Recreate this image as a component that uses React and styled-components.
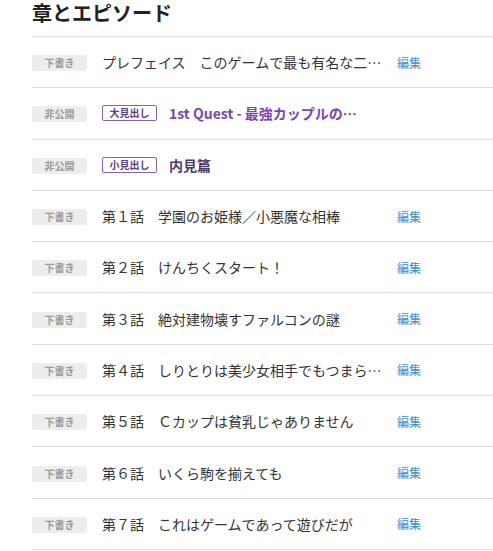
import React from 'react'
import styled, { createGlobalStyle } from 'styled-components'

const GlobalStyle = createGlobalStyle`
  html, body {
    margin: 0;
    padding: 0;
    background: #fff;
  }
  body {
    font-family: "Noto Sans CJK JP", "Noto Sans", sans-serif;
    color: #333;
    overflow: hidden;
  }
`

const episodes = [
  { type: 'episode', status: '下書き', title: 'プレフェイス　このゲームで最も有名な二人の話' },
  { type: 'heading', status: '非公開', level: '大見出し', title: '1st Quest - 最強カップルの誕生と始まり' },
  { type: 'heading', status: '非公開', level: '小見出し', title: '内見篇' },
  { type: 'episode', status: '下書き', title: '第１話　学園のお姫様／小悪魔な相棒' },
  { type: 'episode', status: '下書き', title: '第２話　けんちくスタート！' },
  { type: 'episode', status: '下書き', title: '第３話　絶対建物壊すファルコンの謎' },
  { type: 'episode', status: '下書き', title: '第４話　しりとりは美少女相手でもつまらない' },
  { type: 'episode', status: '下書き', title: '第５話　Ｃカップは貧乳じゃありません' },
  { type: 'episode', status: '下書き', title: '第６話　いくら駒を揃えても' },
  { type: 'episode', status: '下書き', title: '第７話　これはゲームであって遊びだが' },
]

const App = () => {
  return (
    <Page>
      <GlobalStyle />
      <Title>章とエピソード</Title>
      <List>
        {episodes.map((ep, i) => (
          <Row key={i}>
            <Status>{ep.status}</Status>
            {ep.type === 'heading' ? (
              <HeadingCell>
                <LevelTag>{ep.level}</LevelTag>
                <HeadingText $big={ep.level === '大見出し'}>{ep.title}</HeadingText>
              </HeadingCell>
            ) : (
              <>
                <EpisodeTitle>{ep.title}</EpisodeTitle>
                <EditLink href="#">編集</EditLink>
              </>
            )}
          </Row>
        ))}
      </List>
    </Page>
  )
}

export default App

const Page = styled.div`
  padding-left: 32px;
`

const Title = styled.h2`
  margin: 0 0 11px;
  padding-top: 1px;
  line-height: 24px;
  font-size: 20px;
  font-weight: bold;
  color: #222;
`

const List = styled.ul`
  list-style: none;
  margin: 0;
  padding: 0;
  border-top: 1px solid #ddd;
`

const Row = styled.li`
  display: flex;
  align-items: center;
  height: 50.3px;
  border-bottom: 1px solid #ddd;
`

const Status = styled.span`
  flex: none;
  width: 55px;
  height: 16px;
  margin-top: 2px;
  line-height: 16px;
  text-align: center;
  background: #ededed;
  border-radius: 2px;
  color: #999;
  font-size: 10px;
  font-weight: bold;
`

const EpisodeTitle = styled.span`
  flex: none;
  width: 283px;
  margin-left: 15px;
  font-size: 14px;
  color: #333;
  white-space: nowrap;
  overflow: hidden;
  text-overflow: ellipsis;
`

const EditLink = styled.a`
  margin-left: 12px;
  font-size: 12px;
  color: #3c8dcf;
  text-decoration: none;
`

const HeadingCell = styled.div`
  flex: none;
  width: 262px;
  margin-left: 15px;
  display: flex;
  align-items: center;
  gap: 12px;
  overflow: hidden;
`

const LevelTag = styled.span`
  flex: none;
  box-sizing: border-box;
  width: 55px;
  height: 16px;
  line-height: 14px;
  text-align: center;
  border: 1px solid #8b5cc0;
  border-radius: 2px;
  color: #5b3d85;
  font-size: 10px;
  font-weight: bold;
`

const HeadingText = styled.span`
  font-size: 14px;
  font-weight: bold;
  color: ${p => (p.$big ? '#7c45b0' : '#4d3b6b')};
  white-space: nowrap;
  overflow: hidden;
  text-overflow: ellipsis;
`
